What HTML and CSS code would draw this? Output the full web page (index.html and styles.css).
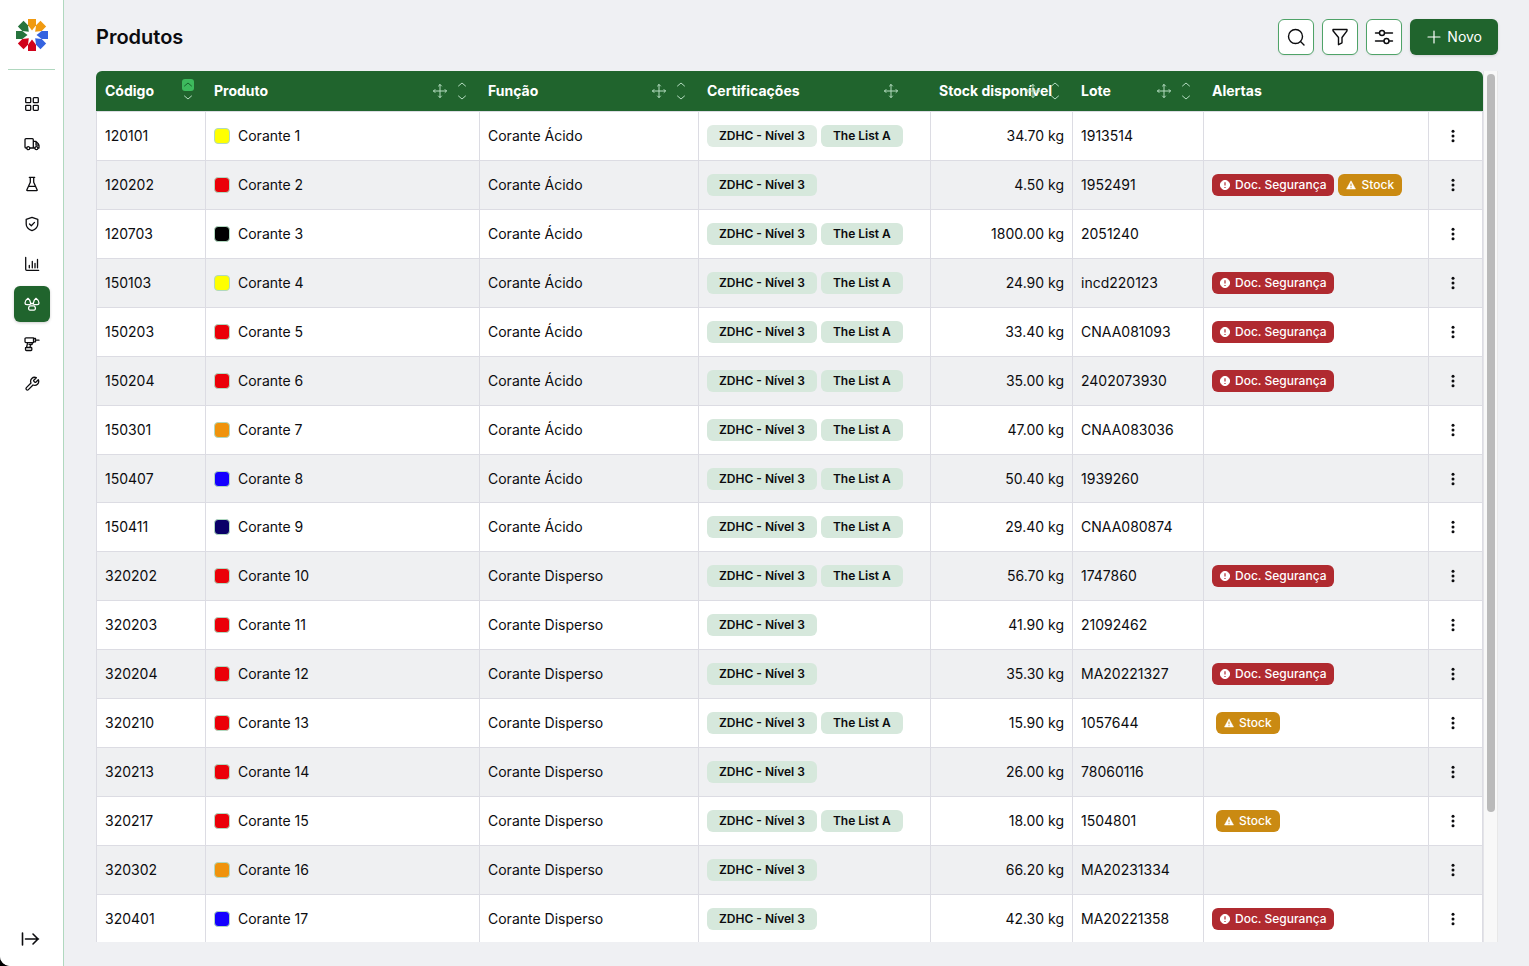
FILE: index.html
```html
<!DOCTYPE html>
<html lang="pt">
<head>
<meta charset="utf-8">
<title>Produtos</title>
<link rel="stylesheet" href="styles.css">
</head>
<body>
<svg class="sprite" aria-hidden="true">
  <symbol id="move" viewBox="0 0 16 16"><path d="M8 1.500v13M1.500 8h13M6.500 3 8 1.500 9.500 3M6.500 13 8 14.500 9.500 13M3 6.500 1.500 8 3 9.500M13 6.500 14.500 8 13 9.500"/></symbol>
  <symbol id="up" viewBox="0 0 12 12"><path d="M2.500 7 6 4l3.500 3"/></symbol>
  <symbol id="down" viewBox="0 0 12 12"><path d="M2.500 5 6 8l3.500-3"/></symbol>
  <symbol id="dots" viewBox="0 0 16 16"><circle cx="8" cy="3.300" r="1.500"/><circle cx="8" cy="8" r="1.500"/><circle cx="8" cy="12.700" r="1.500"/></symbol>
  <symbol id="info" viewBox="0 0 12 12"><circle cx="6" cy="6" r="4.600" fill="#fff"/><path d="M6 3.200v3.400M6 7.900v1" stroke="#b02a30" stroke-width="1.200"/></symbol>
  <symbol id="warn" viewBox="0 0 12 12"><path d="M6 1.800 10.500 10H1.500z" fill="#fff" stroke="#fff" stroke-width=".5" stroke-linejoin="round"/><path d="M6 4.600v2.700M6 8.200v1" stroke="#ca8a12" stroke-width="1"/></symbol>
</svg>
<div class="app">
  <aside class="sidebar">
    <svg class="logo" viewBox="-16 -16 32 32" aria-label="Logo">
      <defs><path id="petal" d="M-4-16H4V-9.700L0-4.500-4-9.700z"/></defs>
      <use href="#petal" fill="#f09a10"/>
      <use href="#petal" fill="#f09a10" transform="rotate(45)"/>
      <use href="#petal" fill="#3563e0" transform="rotate(90)"/>
      <use href="#petal" fill="#3563e0" transform="rotate(135)"/>
      <use href="#petal" fill="#d0021b" transform="rotate(180)"/>
      <use href="#petal" fill="#d0021b" transform="rotate(225)"/>
      <use href="#petal" fill="#26733d" transform="rotate(270)"/>
      <use href="#petal" fill="#26733d" transform="rotate(315)"/>
    </svg>
    <nav class="nav">
      <a href="#" aria-label="Painel"><svg viewBox="0 0 16 16"><rect x="1.700" y="1.700" width="5" height="5" rx=".8"/><rect x="9.300" y="1.700" width="5" height="5" rx=".8"/><rect x="1.700" y="9.300" width="5" height="5" rx=".8"/><rect x="9.300" y="9.300" width="5" height="5" rx=".8"/></svg></a>
      <a href="#" aria-label="Entregas"><svg viewBox="0 0 16 16"><path d="M2.700 12H2a1 1 0 0 1-1-1V3.700a1 1 0 0 1 1-1h6.300a1 1 0 0 1 1 1V12H6M9.300 5.300h2.400L14 7.400l1 2V12h-.8M10.800 12H9.300M12 5.500v3.700h2.800"/><circle cx="4.300" cy="12.200" r="1.500"/><circle cx="12.400" cy="12.200" r="1.500"/></svg></a>
      <a href="#" aria-label="Laboratório"><svg viewBox="0 0 16 16"><path d="M5.300 1.300h5.400M6.300 1.300v5L2.800 14a.5.5 0 0 0 .5.700h9.400a.5.5 0 0 0 .5-.7L9.700 6.300v-5M4.500 10.300h7"/></svg></a>
      <a href="#" aria-label="Segurança"><svg viewBox="0 0 16 16"><path d="M8 1.300 13.800 3.300V8c0 3.300-2.400 5.400-5.800 6.700C4.600 13.400 2.200 11.300 2.200 8V3.300zM5.500 8l1.800 1.700 3.200-3.300"/></svg></a>
      <a href="#" aria-label="Relatórios"><svg viewBox="0 0 16 16"><path d="M1.700 1.500v11.800a1 1 0 0 0 1 1h12M5.300 9.500v2.300M8.300 5.500v6.300M11 7.500v4.300M13.500 3.500v8.300"/></svg></a>
      <a href="#" class="active" aria-label="Produtos" aria-current="page"><svg viewBox="0 0 16 16"><path d="M4 2.300C2.600 3.300 1 5.400 1 7c0 1 .7 1.600 1.800 1.600h2.600C6.300 8.600 6.800 8 6.600 7 6.300 5.300 5.200 3.200 4 2.300zM12 2.300c1.400 1 3 3.100 3 4.700 0 1-.7 1.600-1.800 1.600h-2.600C9.700 8.600 9.200 8 9.400 7c.3-1.700 1.400-3.800 2.600-4.700zM6.400 9.800h3.200c.8 0 1.300.5 1.600 1.400.5 1.600 0 3-1.400 3H6.200c-1.400 0-1.900-1.400-1.400-3 .3-.9.800-1.400 1.600-1.400zM7.200 7.900 8 7.300l.8.600"/></svg></a>
      <a href="#" aria-label="Máquinas"><svg viewBox="0 0 16 16"><path d="M2 1.800h7.500v4.800H2a1 1 0 0 1-1-1V2.800a1 1 0 0 1 1-1zM9.500 2.500h2v3.300h-2M11.500 4.200H15M3.700 6.700 2.500 11.500M8.500 6.700 8 8.500H6.500L6 11.500M6.800 8.500 5 8.300M2 11.500h5a.8.800 0 0 1 .8.800v1.400a.8.800 0 0 1-.8.800H2.500a1 1 0 0 1-1-1V12a.5.500 0 0 1 .5-.5z"/></svg></a>
      <a href="#" aria-label="Manutenção"><svg viewBox="0 0 16 16"><path d="M9.800 4.200a.7.700 0 0 0 0 .9l1.100 1.100a.7.700 0 0 0 .9 0l2.500-2.500a4 4 0 0 1-5.300 5.300l-4.600 4.600a1.400 1.400 0 0 1-2-2L7 7a4 4 0 0 1 5.300-5.300z"/></svg></a>
    </nav>
    <button class="expand" type="button" aria-label="Expandir menu"><svg viewBox="0 0 20 20"><path d="M2.500 4v12M5.500 10h13M13 5l5 5-5 5"/></svg></button>
  </aside>
  <main class="main">
    <header class="topbar">
      <h1>Produtos</h1>
      <div class="actions">
        <button class="tool" type="button" aria-label="Pesquisar"><svg viewBox="0 0 20 20"><circle cx="9.500" cy="9.500" r="7"/><path d="m14.500 14.500 3.500 3.500"/></svg></button>
        <button class="tool" type="button" aria-label="Filtrar"><svg viewBox="0 0 20 20"><path d="M3 2.500h14v1.300L12 10.500v5.300L8.500 17.700V10.500L3 3.800z"/></svg></button>
        <button class="tool" type="button" aria-label="Colunas"><svg viewBox="0 0 20 20"><path d="M1.500 6h4M10.500 6h8M1.500 14h8.500M15 14h3.500"/><circle cx="8" cy="6" r="2.500"/><circle cx="12.500" cy="14" r="2.500"/></svg></button>
        <button class="new" type="button"><svg viewBox="0 0 14 14"><path d="M7 1v12M1 7h12"/></svg>Novo</button>
      </div>
    </header>
    <section class="panel">
      <div class="viewport">
        <table>
          <colgroup><col class="c-code"><col class="c-product"><col class="c-role"><col class="c-cert"><col class="c-stock"><col class="c-lot"><col class="c-alert"><col class="c-menu"></colgroup>
          <thead>
            <tr>
              <th>Código<span class="tools"><button class="sort" type="button" aria-label="Ordenar"><svg class="on"><use href="#up"/></svg><svg><use href="#down"/></svg></button></span></th>
              <th>Produto<span class="tools"><svg class="grip"><use href="#move"/></svg><button class="sort" type="button" aria-label="Ordenar"><svg><use href="#up"/></svg><svg><use href="#down"/></svg></button></span></th>
              <th>Função<span class="tools"><svg class="grip"><use href="#move"/></svg><button class="sort" type="button" aria-label="Ordenar"><svg><use href="#up"/></svg><svg><use href="#down"/></svg></button></span></th>
              <th>Certificações<span class="tools unsorted"><svg class="grip"><use href="#move"/></svg></span></th>
              <th>Stock disponível<span class="tools"><svg class="grip"><use href="#move"/></svg><button class="sort" type="button" aria-label="Ordenar"><svg><use href="#up"/></svg><svg><use href="#down"/></svg></button></span></th>
              <th>Lote<span class="tools"><svg class="grip"><use href="#move"/></svg><button class="sort" type="button" aria-label="Ordenar"><svg><use href="#up"/></svg><svg><use href="#down"/></svg></button></span></th>
              <th>Alertas</th>
              <th></th>
            </tr>
          </thead>
          <tbody>
            <tr><td>120101</td><td><div class="product"><i class="swatch yellow"></i>Corante 1</div></td><td>Corante Ácido</td><td><div class="tags"><span class="tag pale">ZDHC - Nível 3</span><span class="tag">The List A</span></div></td><td class="num">34.70 kg</td><td>1913514</td><td></td><td><button class="menu" type="button" aria-label="Opções"><svg><use href="#dots"/></svg></button></td></tr>
            <tr><td>120202</td><td><div class="product"><i class="swatch red"></i>Corante 2</div></td><td>Corante Ácido</td><td><div class="tags"><span class="tag">ZDHC - Nível 3</span></div></td><td class="num">4.50 kg</td><td>1952491</td><td><div class="alerts"><span class="alert doc"><svg><use href="#info"/></svg>Doc. Segurança</span><span class="alert stock"><svg><use href="#warn"/></svg>Stock</span></div></td><td><button class="menu" type="button" aria-label="Opções"><svg><use href="#dots"/></svg></button></td></tr>
            <tr><td>120703</td><td><div class="product"><i class="swatch black"></i>Corante 3</div></td><td>Corante Ácido</td><td><div class="tags"><span class="tag">ZDHC - Nível 3</span><span class="tag">The List A</span></div></td><td class="num">1800.00 kg</td><td>2051240</td><td></td><td><button class="menu" type="button" aria-label="Opções"><svg><use href="#dots"/></svg></button></td></tr>
            <tr><td>150103</td><td><div class="product"><i class="swatch yellow"></i>Corante 4</div></td><td>Corante Ácido</td><td><div class="tags"><span class="tag">ZDHC - Nível 3</span><span class="tag">The List A</span></div></td><td class="num">24.90 kg</td><td>incd220123</td><td><div class="alerts"><span class="alert doc"><svg><use href="#info"/></svg>Doc. Segurança</span></div></td><td><button class="menu" type="button" aria-label="Opções"><svg><use href="#dots"/></svg></button></td></tr>
            <tr><td>150203</td><td><div class="product"><i class="swatch red"></i>Corante 5</div></td><td>Corante Ácido</td><td><div class="tags"><span class="tag">ZDHC - Nível 3</span><span class="tag">The List A</span></div></td><td class="num">33.40 kg</td><td>CNAA081093</td><td><div class="alerts"><span class="alert doc"><svg><use href="#info"/></svg>Doc. Segurança</span></div></td><td><button class="menu" type="button" aria-label="Opções"><svg><use href="#dots"/></svg></button></td></tr>
            <tr><td>150204</td><td><div class="product"><i class="swatch red"></i>Corante 6</div></td><td>Corante Ácido</td><td><div class="tags"><span class="tag">ZDHC - Nível 3</span><span class="tag">The List A</span></div></td><td class="num">35.00 kg</td><td>2402073930</td><td><div class="alerts"><span class="alert doc"><svg><use href="#info"/></svg>Doc. Segurança</span></div></td><td><button class="menu" type="button" aria-label="Opções"><svg><use href="#dots"/></svg></button></td></tr>
            <tr><td>150301</td><td><div class="product"><i class="swatch orange"></i>Corante 7</div></td><td>Corante Ácido</td><td><div class="tags"><span class="tag">ZDHC - Nível 3</span><span class="tag">The List A</span></div></td><td class="num">47.00 kg</td><td>CNAA083036</td><td></td><td><button class="menu" type="button" aria-label="Opções"><svg><use href="#dots"/></svg></button></td></tr>
            <tr class="short"><td>150407</td><td><div class="product"><i class="swatch blue"></i>Corante 8</div></td><td>Corante Ácido</td><td><div class="tags"><span class="tag">ZDHC - Nível 3</span><span class="tag">The List A</span></div></td><td class="num">50.40 kg</td><td>1939260</td><td></td><td><button class="menu" type="button" aria-label="Opções"><svg><use href="#dots"/></svg></button></td></tr>
            <tr><td>150411</td><td><div class="product"><i class="swatch navy"></i>Corante 9</div></td><td>Corante Ácido</td><td><div class="tags"><span class="tag">ZDHC - Nível 3</span><span class="tag">The List A</span></div></td><td class="num">29.40 kg</td><td>CNAA080874</td><td></td><td><button class="menu" type="button" aria-label="Opções"><svg><use href="#dots"/></svg></button></td></tr>
            <tr><td>320202</td><td><div class="product"><i class="swatch red"></i>Corante 10</div></td><td>Corante Disperso</td><td><div class="tags"><span class="tag">ZDHC - Nível 3</span><span class="tag">The List A</span></div></td><td class="num">56.70 kg</td><td>1747860</td><td><div class="alerts"><span class="alert doc"><svg><use href="#info"/></svg>Doc. Segurança</span></div></td><td><button class="menu" type="button" aria-label="Opções"><svg><use href="#dots"/></svg></button></td></tr>
            <tr><td>320203</td><td><div class="product"><i class="swatch red"></i>Corante 11</div></td><td>Corante Disperso</td><td><div class="tags"><span class="tag">ZDHC - Nível 3</span></div></td><td class="num">41.90 kg</td><td>21092462</td><td></td><td><button class="menu" type="button" aria-label="Opções"><svg><use href="#dots"/></svg></button></td></tr>
            <tr><td>320204</td><td><div class="product"><i class="swatch red"></i>Corante 12</div></td><td>Corante Disperso</td><td><div class="tags"><span class="tag">ZDHC - Nível 3</span></div></td><td class="num">35.30 kg</td><td>MA20221327</td><td><div class="alerts"><span class="alert doc"><svg><use href="#info"/></svg>Doc. Segurança</span></div></td><td><button class="menu" type="button" aria-label="Opções"><svg><use href="#dots"/></svg></button></td></tr>
            <tr><td>320210</td><td><div class="product"><i class="swatch red"></i>Corante 13</div></td><td>Corante Disperso</td><td><div class="tags"><span class="tag">ZDHC - Nível 3</span><span class="tag">The List A</span></div></td><td class="num">15.90 kg</td><td>1057644</td><td><div class="alerts"><span class="alert stock"><svg><use href="#warn"/></svg>Stock</span></div></td><td><button class="menu" type="button" aria-label="Opções"><svg><use href="#dots"/></svg></button></td></tr>
            <tr><td>320213</td><td><div class="product"><i class="swatch red"></i>Corante 14</div></td><td>Corante Disperso</td><td><div class="tags"><span class="tag">ZDHC - Nível 3</span></div></td><td class="num">26.00 kg</td><td>78060116</td><td></td><td><button class="menu" type="button" aria-label="Opções"><svg><use href="#dots"/></svg></button></td></tr>
            <tr><td>320217</td><td><div class="product"><i class="swatch red"></i>Corante 15</div></td><td>Corante Disperso</td><td><div class="tags"><span class="tag">ZDHC - Nível 3</span><span class="tag">The List A</span></div></td><td class="num">18.00 kg</td><td>1504801</td><td><div class="alerts"><span class="alert stock"><svg><use href="#warn"/></svg>Stock</span></div></td><td><button class="menu" type="button" aria-label="Opções"><svg><use href="#dots"/></svg></button></td></tr>
            <tr><td>320302</td><td><div class="product"><i class="swatch orange"></i>Corante 16</div></td><td>Corante Disperso</td><td><div class="tags"><span class="tag">ZDHC - Nível 3</span></div></td><td class="num">66.20 kg</td><td>MA20231334</td><td></td><td><button class="menu" type="button" aria-label="Opções"><svg><use href="#dots"/></svg></button></td></tr>
            <tr><td>320401</td><td><div class="product"><i class="swatch blue"></i>Corante 17</div></td><td>Corante Disperso</td><td><div class="tags"><span class="tag">ZDHC - Nível 3</span></div></td><td class="num">42.30 kg</td><td>MA20221358</td><td><div class="alerts"><span class="alert doc"><svg><use href="#info"/></svg>Doc. Segurança</span></div></td><td><button class="menu" type="button" aria-label="Opções"><svg><use href="#dots"/></svg></button></td></tr>
          </tbody>
        </table>
      </div>
      <div class="scrollbar"><div class="thumb"></div></div>
    </section>
  </main>
</div>
</body>
</html>
```
FILE: styles.css
```css
* { box-sizing: border-box; }
body {
  margin: 0;
  background: #000;
  color: #0c0c0f;
  font: 14px/20px Inter, "Liberation Sans", sans-serif;
}
button { padding: 0; border: 0; background: none; color: inherit; font: inherit; cursor: pointer; }
svg { display: block; flex: none; fill: none; stroke: currentColor; stroke-linecap: round; stroke-linejoin: round; }
.sprite { position: absolute; width: 0; height: 0; }

.app {
  display: flex;
  height: 100vh;
  overflow: hidden;
  background: #eff0f3;
  border-bottom-left-radius: 10px;
}

.sidebar {
  display: flex;
  flex-direction: column;
  align-items: center;
  width: 64px;
  padding: 19px 8px 17px;
  background: #fff;
  border-right: 1px solid #b0d8bf;
}
.logo { width: 32px; height: 32px; stroke: none; }
.nav {
  display: flex;
  flex-direction: column;
  align-items: center;
  gap: 4px;
  align-self: stretch;
  margin-top: 18px;
  padding-top: 16px;
  border-top: 1px solid #b0d8bf;
}
.nav a {
  display: grid;
  place-items: center;
  width: 36px;
  height: 36px;
  border-radius: 6px;
  color: #0c0c0f;
}
.nav svg { width: 16px; height: 16px; stroke-width: 1.3; }
.nav .active { background: #20642d; color: #fff; box-shadow: 0 1px 3px #0003; }
.expand { margin-top: auto; margin-right: 4px; }
.expand svg { width: 20px; height: 20px; stroke-width: 1.6; }

.main {
  flex: 1;
  display: flex;
  flex-direction: column;
  min-width: 0;
  padding: 19px 31px 24px 32px;
}
.topbar { display: flex; align-items: center; justify-content: space-between; margin-bottom: 16px; }
h1 { margin: 0; font-size: 20px; line-height: 28px; font-weight: 600; }
.actions { display: flex; gap: 8px; }
.tool {
  display: grid;
  place-items: center;
  width: 36px;
  height: 36px;
  background: #fff;
  border: 1px solid #4fa368;
  border-radius: 6px;
  box-shadow: 0 1px 2px #0001;
}
.tool svg { width: 20px; height: 20px; stroke-width: 1.4; }
.new {
  display: flex;
  align-items: center;
  gap: 6px;
  height: 36px;
  padding: 0 16px 0 17px;
  border-radius: 6px;
  background: #20642d;
  color: #fff;
  box-shadow: 0 1px 3px #0002;
}
.new svg { width: 14px; height: 14px; stroke-width: 1.2; }

.panel { display: flex; flex: 1; min-height: 0; }
.viewport { flex: 1; min-width: 0; overflow: hidden; border-radius: 6px 6px 0 0; }
table { width: 100%; table-layout: fixed; border-collapse: separate; border-spacing: 0; }
.c-code { width: 110px; }
.c-product { width: 274px; }
.c-role { width: 219px; }
.c-cert { width: 232px; }
.c-stock { width: 142px; }
.c-lot { width: 131px; }
.c-menu { width: 54px; }

th {
  position: relative;
  height: 41px;
  padding: 0 8px;
  background: #20642d;
  border-bottom: 1px solid #dcdce3;
  color: #fff;
  font-weight: 700;
  text-align: left;
  white-space: nowrap;
}
th:first-child { padding-left: 9px; }
.tools {
  position: absolute;
  top: 0;
  bottom: 0;
  right: 12px;
  display: flex;
  align-items: center;
  gap: 8px;
  color: #b5dcc1;
}
.unsorted { right: 32px; }
.grip { width: 16px; height: 16px; stroke-width: 1; }
.sort { display: flex; flex-direction: column; }
.sort svg { width: 12px; height: 12px; }
.sort .on { border-radius: 3px; background: #3dba5d; color: #17632c; }

td {
  height: 49px;
  padding: 0 8px;
  background: #fff;
  border-right: 1px solid #dcdce3;
  border-bottom: 1px solid #dcdce3;
  white-space: nowrap;
}
td:first-child { border-left: 1px solid #dcdce3; }
tbody tr:nth-child(even) td { background: #eff0f2; }
.short td { height: 48px; }
.num { text-align: right; }
.product { display: flex; align-items: center; gap: 8px; }
.swatch { width: 16px; height: 16px; border: 1px solid #b0d8bf; border-radius: 4px; }
.yellow { background: #ff0; }
.red { background: #eb0008; }
.black { background: #000; }
.orange { background: #f0930c; }
.blue { background: #1400ff; }
.navy { background: #0a0068; }

.tags, .alerts { display: flex; gap: 4px; }
.tag, .alert { display: flex; align-items: center; height: 22px; border-radius: 6px; font-size: 12px; line-height: 16px; }
.tag { padding: 0 12px; background: #d6e8dc; font-weight: 600; }
.pale { background: #dfece3; }
.alert { gap: 4px; padding: 0 8px 0 7px; color: #fff; font-weight: 500; }
.alert svg { width: 12px; height: 12px; stroke-linecap: butt; }
.doc { background: #b02a30; }
.stock { background: #ca8a12; }
.stock:first-child { margin-left: 4px; }
.menu { display: block; margin-left: 8px; }
.menu svg { width: 16px; height: 16px; fill: currentColor; stroke: none; }

.scrollbar { width: 15px; padding: 3px; background: #f8f8f8; border-left: 1px solid #e4e4e8; border-right: 1px solid #e8e8e8; }
.thumb { width: 8px; height: 85.3%; border-radius: 4px; background: #bababa; }
```
